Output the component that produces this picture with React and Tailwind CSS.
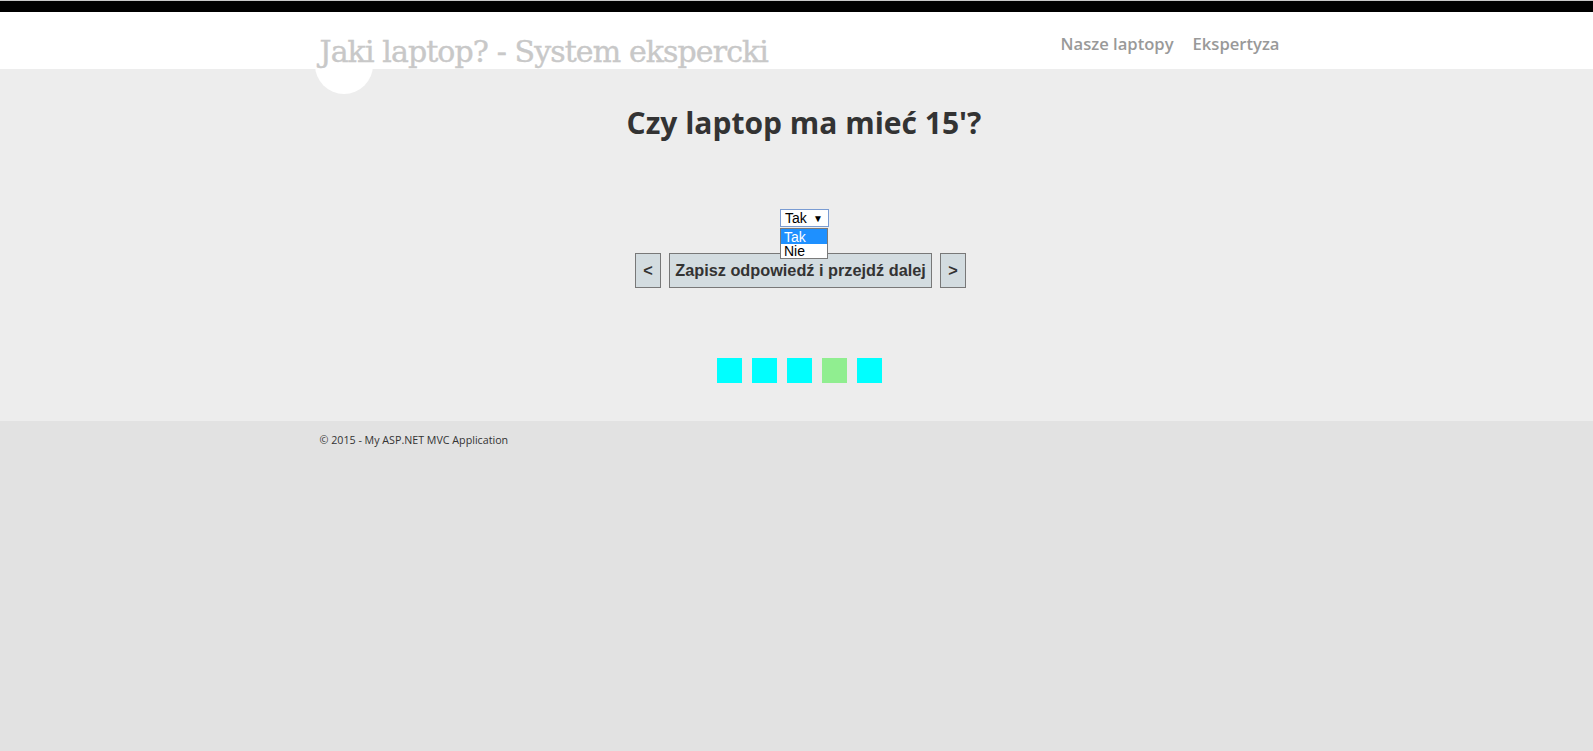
import React from 'react';

const steps = ['done', 'done', 'done', 'current', 'done'];

const App = () => {
  return (
    <div className="min-h-[751px] bg-[#e2e2e2] text-[#232323]" style={{ fontFamily: '"Open Sans", "Noto Sans", sans-serif' }}>
      {/* top strip */}
      <div className="h-px bg-[#c8c8c8]" />
      <div className="h-[11px] bg-black" />

      {/* header */}
      <header className="bg-white h-[57px]">
        <div className="w-[960px] mx-auto relative h-full flex justify-between">
          <div className="absolute left-[-2px] top-[24px] w-[58px] h-[58px] rounded-full bg-white z-10" />
          <h1
            className="relative z-20 pl-[3px] pt-[22px] text-[30px] leading-[36px] text-[#c8c8c8] font-normal tracking-[-0.9px] [-webkit-text-stroke:0.4px_#c8c8c8]"
            style={{ fontFamily: '"DejaVu Serif", "Liberation Serif", serif' }}
          >
            Jaki laptop? - System ekspercki
          </h1>
          <nav className="flex gap-[19px] pt-[20px] mr-[-3px] text-[16.6px] font-semibold text-[#999]">
            <a href="#">Nasze laptopy</a>
            <a href="#">Ekspertyza</a>
          </nav>
        </div>
      </header>

      {/* main */}
      <main className="bg-[#ededed] h-[352px]">
        <div className="w-[960px] mx-auto flex flex-col items-center">
          <h2 className="pt-[36px] pl-[15px] text-[30px] leading-[36px] font-bold text-[#333]">
            Czy laptop ma mieć 15'?
          </h2>

          <div className="relative mt-[68px] ml-[16px]" style={{ fontFamily: '"Liberation Sans", Arial, sans-serif' }}>
            <div className="w-[49px] h-[18px] bg-white border border-[#7a9cd3] flex items-center justify-between pl-[4px] pr-[5px] text-[14px] text-black">
              <span>Tak</span>
              <span className="text-[10px]">▼</span>
            </div>
            <ul className="absolute left-0 top-[19px] w-[48px] bg-white border border-[#7a7a7a] text-[14px] leading-[14px] z-10">
              <li className="bg-[#1e90ff] text-white pl-[3px] h-[15px] pt-px">Tak</li>
              <li className="text-black pl-[3px] h-[14px]">Nie</li>
            </ul>
          </div>

          <div
            className="flex gap-[8px] mt-[26px] ml-[8px] text-[16.3px] font-bold text-[#333]"
            style={{ fontFamily: '"Liberation Sans", Arial, sans-serif' }}
          >
            <button className="w-[26px] h-[35px] bg-[#d3dce0] border border-[#787878]">&lt;</button>
            <button className="w-[263px] h-[35px] bg-[#d3dce0] border border-[#787878]">Zapisz odpowiedź i przejdź dalej</button>
            <button className="w-[26px] h-[35px] bg-[#d3dce0] border border-[#787878]">&gt;</button>
          </div>

          <div className="flex gap-[10px] mt-[70px] ml-[6px]">
            {steps.map((s, i) => (
              <div key={i} className={s === 'current' ? 'w-[25px] h-[25px] bg-[#90ee90]' : 'w-[25px] h-[25px] bg-[#00ffff]'} />
            ))}
          </div>
        </div>
      </main>

      {/* footer */}
      <footer className="bg-[#e2e2e2]">
        <div className="w-[960px] mx-auto pt-[11px] pl-[3px] text-[10.7px] leading-[16px] text-[#333]">
          © 2015 - My ASP.NET MVC Application
        </div>
      </footer>
    </div>
  );
};

export default App;
